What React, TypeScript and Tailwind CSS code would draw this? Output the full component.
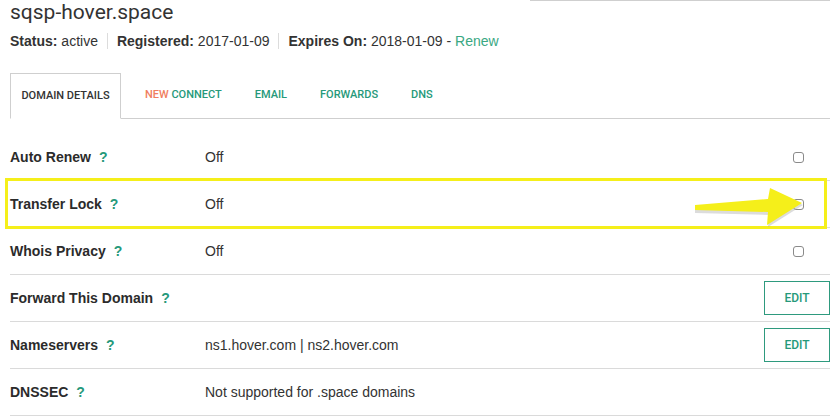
import React from "react";

const green = "text-[#26997a]";

function Help() {
  return <span className={`ml-2 font-bold ${green}`}>?</span>;
}

function Checkbox() {
  return (
    <span
      className="ml-auto mr-[26px] block h-[11px] w-[11px] rounded-[3px] border border-[#8a8a8a] bg-white"
      aria-hidden="true"
    />
  );
}

function EditButton() {
  return (
    <button className="ml-auto flex h-[34px] w-[66px] items-center justify-center border-[1.5px] border-[#2e9a7e] bg-white font-['Roboto',sans-serif] text-[12px] font-medium text-[#26997a]">
      EDIT
    </button>
  );
}

type Row = {
  label: string;
  value?: string;
  action?: "check" | "edit";
  highlight?: boolean;
};

const rows: Row[] = [
  { label: "Auto Renew", value: "Off", action: "check" },
  { label: "Transfer Lock", value: "Off", action: "check", highlight: true },
  { label: "Whois Privacy", value: "Off", action: "check" },
  { label: "Forward This Domain", action: "edit" },
  { label: "Nameservers", value: "ns1.hover.com | ns2.hover.com", action: "edit" },
  { label: "DNSSEC", value: "Not supported for .space domains" },
];

function Arrow() {
  return (
    <svg
      className="absolute left-[680px] top-[4px]"
      width="120"
      height="45"
      viewBox="0 0 120 45"
      aria-hidden="true"
    >
      <path
        d="M113 20 L81 5 L79 16 L5 22 L5 28 L79 30 L78 42 Z"
        fill="#9a9a9a"
        opacity="0.35"
      />
      <path d="M112 18 L80 3 L78 14 L5 20 L5 25 L78 27 L77 40 Z" fill="#f5ef1a" />
    </svg>
  );
}

export default function App() {
  return (
    <div className="h-[418px] w-[830px] overflow-hidden bg-white font-['Liberation_Sans',Arial,sans-serif] text-[#333]">
      {/* Header */}
      <div className="flex items-start justify-between">
        <h1 className="pl-[10px] font-['Roboto',sans-serif] text-[21px] leading-[24px] text-[#333]">
          sqsp-hover.space
        </h1>
        <div className="w-[300px] border-t border-[#cfcfcf]" />
      </div>
      <div className="mt-2 flex h-[18px] items-center pl-[10px] text-[14px] leading-[18px]">
        <span>
          <b>Status:</b> active
        </span>
        <span className="mx-[9px] h-4 w-px bg-[#dcdcdc]" />
        <span>
          <b>Registered:</b> 2017-01-09
        </span>
        <span className="mx-[9px] h-4 w-px bg-[#dcdcdc]" />
        <span>
          <b>Expires On:</b> 2018-01-09 - <span className="text-[#3aa883]">Renew</span>
        </span>
      </div>

      {/* Tabs */}
      <div className="ml-[10px] mt-[23px] flex h-[46px] items-stretch border-b border-[#cfcfcf] font-['Roboto',sans-serif] text-[11px] font-medium">
        <div className="-mb-px flex w-[111px] items-center justify-center border border-b-white border-[#cfcfcf] bg-white text-[#333]">
          DOMAIN DETAILS
        </div>
        <div className="ml-[24px] flex items-center gap-[33px] text-[#26997a]">
          <span>
            <span className="text-[#f07e5e]">NEW</span> CONNECT
          </span>
          <span>EMAIL</span>
          <span>FORWARDS</span>
          <span>DNS</span>
        </div>
      </div>

      {/* Rows */}
      <div className="ml-[10px] mt-[15px]">
        {rows.map((r) => (
          <div
            key={r.label}
            className="relative flex h-[47px] items-center border-b border-[#dadada] text-[14px]"
          >
            <div className="flex w-[195px] items-center font-bold text-[#2b2b2b]">
              {r.label}
              <Help />
            </div>
            {r.value && <div>{r.value}</div>}
            {r.action === "check" && <Checkbox />}
            {r.action === "edit" && <EditButton />}
            {r.highlight && (
              <>
                <div className="pointer-events-none absolute -left-[5px] -top-[3px] h-[51px] w-[822px] border-[3px] border-[#f5ef1a]" />
                <Arrow />
              </>
            )}
          </div>
        ))}
      </div>
    </div>
  );
}
